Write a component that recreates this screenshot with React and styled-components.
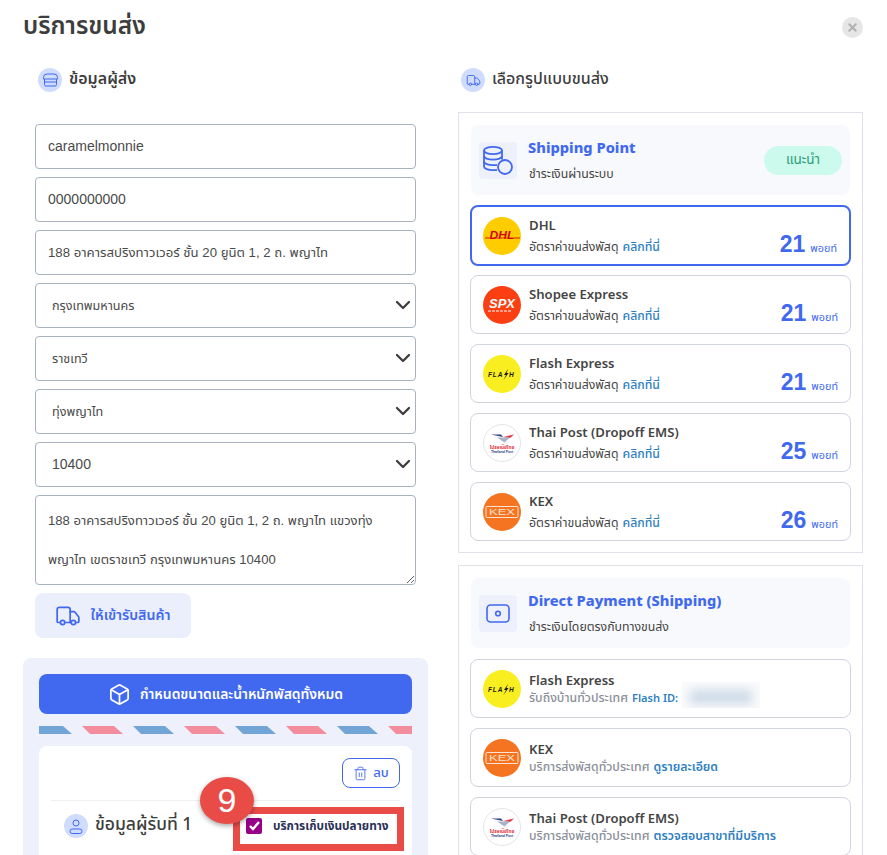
import styled, { createGlobalStyle } from 'styled-components'
import { ChevronDown, Box, Trash2, Truck, X } from 'lucide-react'

const GlobalStyle = createGlobalStyle`
  html, body {
    margin: 0;
    height: 855px;
    overflow: hidden;
    background: #fff;
    font-family: "Noto Sans Thai", "Noto Sans", "Liberation Sans", sans-serif;
    color: #444;
  }
  * { box-sizing: border-box; }
`

const Page = styled.div`
  width: 887px;
  height: 855px;
  overflow: hidden;
  padding: 11px 24px 0 23px;
`

const TitleBar = styled.div`
  display: flex;
  justify-content: space-between;
  align-items: center;
  height: 32px;
`

const Title = styled.h1`
  margin: 0;
  font-size: 24.4px;
  line-height: 32px;
  font-weight: 600;
  color: #3d3d3d;
`

const CloseButton = styled.button`
  width: 21px;
  height: 21px;
  padding: 0;
  border: 0;
  border-radius: 50%;
  background: #e6e6e6;
  color: #b0b0b0;
  display: flex;
  align-items: center;
  justify-content: center;
`

const Columns = styled.div`
  display: grid;
  grid-template-columns: 405px 405px;
  column-gap: 30px;
  margin-top: 25px;
`

const Heading = styled.div`
  display: flex;
  align-items: center;
  gap: 7px;
  height: 24px;
  padding-left: ${p => p.$indent}px;
  font-size: 16px;
  font-weight: ${p => p.$weight};
  color: #3d3d3d;
`

const LiftedText = styled.span`
  margin-bottom: ${p => p.$lift}px;
`

const HeadingIcon = styled.span`
  width: 24px;
  height: 24px;
  border-radius: 50%;
  background: #d0dcfd;
  color: #4169ef;
  display: flex;
  align-items: center;
  justify-content: center;
  flex: none;
`

const Form = styled.div`
  display: flex;
  flex-direction: column;
  gap: 8px;
  margin: 32px 12px 0;
`

const Input = styled.input`
  width: 381px;
  height: 45px;
  padding: 0 12px ${p => (p.$thai ? 0 : 2)}px;
  border: 1px solid #a9b2bf;
  border-radius: 4px;
  font: ${p => (p.$thai ? 13.2 : 14)}px "Liberation Sans", "Noto Sans Thai", sans-serif;
  color: #4a4a4a;
`

const SelectWrap = styled.div`
  position: relative;
  width: 381px;
  color: #3d3d3d;

  svg {
    position: absolute;
    right: 1px;
    top: 10px;
    pointer-events: none;
  }
`

const Select = styled.select`
  appearance: none;
  width: 100%;
  height: 45px;
  padding: 0 16px ${p => (p.$thai ? 0 : 2)}px;
  background: #fff;
  border: 1px solid #a9b2bf;
  border-radius: 4px;
  font: ${p => (p.$thai ? 12.6 : 14)}px "Liberation Sans", "Noto Sans Thai", sans-serif;
  color: #4a4a4a;
`

const TextArea = styled.textarea`
  width: 381px;
  height: 90px;
  padding: 5px 12px;
  border: 1px solid #a9b2bf;
  border-radius: 4px;
  font: 13.1px/39px "Liberation Sans", "Noto Sans Thai", sans-serif;
  color: #4a4a4a;
  overflow: hidden;
  display: block;
`

const PickupButton = styled.button`
  width: 156px;
  height: 45px;
  border: 0;
  border-radius: 8px;
  background: #ebeffc;
  color: #4169ef;
  display: flex;
  align-items: center;
  justify-content: center;
  gap: 9px;
  font: 600 14.2px "Noto Sans Thai", "Noto Sans", sans-serif;
`

const ParcelPanel = styled.div`
  margin-top: 20px;
  width: 405px;
  padding: 16px;
  background: #eef1fb;
  border-radius: 8px;
`

const SizeButton = styled.button`
  width: 373px;
  height: 40px;
  border: 0;
  border-radius: 8px;
  background: #4169ef;
  color: #fff;
  display: flex;
  align-items: center;
  justify-content: center;
  gap: 9px;
  font: 600 13.9px "Noto Sans Thai", "Noto Sans", sans-serif;
`

const Stripes = styled.svg`
  display: block;
  margin: 12px 0;
`

const RecipientCard = styled.div`
  background: #fff;
  border-radius: 8px;
  padding: 12px 12px 40px;
`

const DeleteRow = styled.div`
  display: flex;
  justify-content: flex-end;
  padding-bottom: 12px;
  border-bottom: 1px solid #eff0f3;
`

const DeleteButton = styled.button`
  width: 58px;
  height: 30px;
  background: #fff;
  border: 1px solid #4169ef;
  border-radius: 8px;
  color: #4169ef;
  display: flex;
  align-items: center;
  justify-content: center;
  gap: 5px;
  font: 500 13px "Noto Sans Thai", "Noto Sans", sans-serif;
`

const RecipientRow = styled.div`
  position: relative;
  display: flex;
  align-items: flex-start;
  justify-content: space-between;
  padding: 6px 0 0 13px;
`

const RecipientName = styled.div`
  display: flex;
  align-items: center;
  gap: 7px;
  height: 24px;
  margin-top: 7px;
  font-size: 17.5px;
  font-weight: 500;
  color: #3d3d3d;
`

const CodBox = styled.label`
  display: flex;
  align-items: center;
  gap: 11px;
  width: 171px;
  height: 44px;
  margin-right: -4px;
  padding: 0 0 6px 6px;
  border: 7px solid #e94b47;
  font-size: 11.8px;
  font-weight: 700;
  color: #2a3154;
`

const CheckMark = styled.span`
  width: 16px;
  height: 16px;
  border-radius: 2px;
  background: #960087;
  color: #fff;
  display: flex;
  align-items: center;
  justify-content: center;
  flex: none;
`

const StepBadge = styled.div`
  position: absolute;
  left: 149px;
  top: -24px;
  width: 54px;
  height: 47px;
  border-radius: 50%;
  background: #e94b47;
  box-shadow: 0 2px 5px rgba(0, 0, 0, 0.35);
  color: #fff;
  font: 34px/47px "Liberation Sans", sans-serif;
  text-align: center;
`

const MethodPanel = styled.div`
  width: 405px;
  padding: 12px 11px 11px;
  border: 1px solid #dfe2ea;
  display: flex;
  flex-direction: column;
  gap: 10px;
  & + & {
    margin-top: 12px;
  }
`

const PanelStack = styled.div`
  margin-top: 20px;
`

const MethodHead = styled.div`
  display: flex;
  align-items: center;
  height: 70px;
  margin: 0 1px ${p => p.$after}px;
  padding: 0 8px;
  border-radius: 8px;
  background: #f8f9fc;
`

const HeadTile = styled.div`
  width: 38px;
  height: 37px;
  border-radius: 4px;
  background: #eef1fb;
  color: #4169ef;
  display: flex;
  align-items: center;
  justify-content: center;
  flex: none;
`

const HeadText = styled.div`
  margin-left: 11px;
  flex: 1;
`

const HeadTitle = styled.div`
  font-size: 14.6px;
  line-height: 24px;
  font-weight: 800;
  color: #4169ef;
`

const HeadSub = styled.div`
  font-size: 12.3px;
  line-height: 18px;
  margin-top: 5px;
  padding-left: 1px;
  color: #444;
`

const Pill = styled.span`
  width: 78px;
  height: 29px;
  border-radius: 15px;
  background: #ccfbed;
  color: #2a9d78;
  font-size: 13.5px;
  display: flex;
  align-items: center;
  justify-content: center;
`

const Row = styled.div`
  display: flex;
  align-items: center;
  height: ${p => (p.$selected ? 61 : 59)}px;
  margin-bottom: ${p => (p.$selected ? -1 : 0)}px;
  padding: 0 12px 0 ${p => (p.$selected ? 11 : 12)}px;
  border: ${p => (p.$selected ? '2px solid #4169ef' : '1px solid #cfd4de')};
  border-radius: 8px;
`

const LogoWrap = styled.svg`
  flex: none;
  display: block;
`

const RowText = styled.div`
  margin: 2px 0 0 8px;
  flex: 1;
`

const RowName = styled.div`
  font-size: 13.1px;
  line-height: 18px;
  font-weight: 600;
  color: #444;
`

const RowSub = styled.div`
  display: flex;
  align-items: center;
  gap: 4px;
  font-size: 12.3px;
  line-height: 18px;
  font-weight: ${p => (p.$muted ? 500 : 400)};
  margin-top: ${p => (p.$muted ? 0 : 4)}px;
  color: ${p => (p.$muted ? '#8a8f99' : '#444')};
`

const Link = styled.span`
  color: #2f7fc1;
  font-weight: ${p => (p.$bold ? 600 : 500)};
  font-size: ${p => (p.$small ? '11px' : 'inherit')};
`

const Points = styled.div`
  align-self: flex-end;
  display: flex;
  align-items: baseline;
  gap: 5px;
  padding-bottom: 7px;
  color: #4169ef;
  font-size: 10.8px;
`

const PointValue = styled.span`
  font: 700 23px/26px "Liberation Sans", sans-serif;
`

const BlurredId = styled.span`
  width: 78px;
  height: 26px;
  background: #f9fafc;
  overflow: hidden;
  margin-top: -8px;
  display: block;

  &::after {
    content: '';
    display: block;
    width: 62px;
    height: 14px;
    margin: 8px 0 0 8px;
    background: #cfdbe8;
    filter: blur(5px);
  }
`

const StoreIcon = () => (
  <svg width="15" height="14" viewBox="0 0 15 14" fill="none" stroke="currentColor" strokeWidth="1">
    <path d="M4 1h7a3.5 3.5 0 0 1 3.5 3.5V6H.5V4.5A3.5 3.5 0 0 1 4 1z" />
    <path d="M1.5 6v5.5A1.5 1.5 0 0 0 3 13h9a1.5 1.5 0 0 0 1.5-1.5V6" />
    <path d="M1.5 9h12" />
  </svg>
)

const UserIcon = () => (
  <svg width="14" height="15" viewBox="0 0 14 15" fill="none" stroke="currentColor" strokeWidth="1">
    <circle cx="7" cy="4" r="3" />
    <rect x="1" y="10" width="12" height="4.5" rx="2.2" />
  </svg>
)

const CoinsIcon = () => (
  <svg width="30" height="29" viewBox="0 0 30 29" fill="none" stroke="currentColor" strokeWidth="1.8">
    <ellipse cx="10" cy="4.5" rx="9" ry="3.6" />
    <path d="M1 4.5v16c0 2 4 3.6 9 3.6h4" />
    <path d="M19 4.5v9" />
    <path d="M1 10c0 2 4 3.6 9 3.6s9-1.6 9-3.6" />
    <path d="M1 15.5c0 2 4 3.6 9 3.6h4" />
    <circle cx="22" cy="21" r="7" fill="#eef1fb" />
  </svg>
)

const CashIcon = () => (
  <svg width="24" height="19" viewBox="0 0 24 19" fill="none" stroke="currentColor" strokeWidth="1.6">
    <rect x="1" y="1" width="22" height="17" rx="3.5" />
    <circle cx="12" cy="9.5" r="2.3" />
    <path d="M4.5 4.5h.01M19.5 4.5h.01M4.5 14.5h.01M19.5 14.5h.01" strokeWidth="1.8" />
  </svg>
)

// logos redrawn by hand, only their shape and colours
const Logo = ({ kind }) => {
  if (kind === 'dhl') {
    return (
      <LogoWrap width="38" height="38" viewBox="0 0 38 38">
        <circle cx="19" cy="19" r="19" fill="#ffcc00" />
        <path d="M2 21h35" stroke="#d40511" strokeWidth="0.9" />
        <text x="19" y="22" textAnchor="middle" textLength="25" lengthAdjust="spacingAndGlyphs" fontSize="10" fontWeight="700" fontStyle="italic" fill="#d40511" stroke="#ffcc00" strokeWidth="0.5" paintOrder="stroke" fontFamily="Liberation Sans">DHL</text>
      </LogoWrap>
    )
  }
  if (kind === 'spx') {
    return (
      <LogoWrap width="38" height="38" viewBox="0 0 38 38">
        <circle cx="19" cy="19" r="19" fill="#fb3f12" />
        <text x="19" y="22" textAnchor="middle" fontSize="13" fontWeight="700" fontStyle="italic" fill="#fff" fontFamily="Liberation Sans">SPX</text>
        <path d="M5 25h24" stroke="#fff" strokeWidth="1" strokeDasharray="3 1" />
      </LogoWrap>
    )
  }
  if (kind === 'flash') {
    return (
      <LogoWrap width="38" height="38" viewBox="0 0 38 38">
        <circle cx="19" cy="19" r="19" fill="#f9ee1f" />
        <text x="5" y="21.5" fontSize="6.5" fontWeight="700" fontStyle="italic" letterSpacing="0.9" fill="#1c1c1c" fontFamily="Liberation Sans">FLA</text>
        <path d="M25 14l-4 6h2l-2.5 5 5-7h-2z" fill="#1c1c1c" />
        <text x="26" y="21.5" fontSize="6.5" fontWeight="700" fontStyle="italic" fill="#1c1c1c" fontFamily="Liberation Sans">H</text>
      </LogoWrap>
    )
  }
  if (kind === 'post') {
    return (
      <LogoWrap width="38" height="38" viewBox="0 0 38 38">
        <circle cx="19" cy="19" r="18.5" fill="#fff" stroke="#e4e5ea" />
        <path d="M8 10.5h10l2 2.5z" fill="#2a3f87" />
        <path d="M20 13l11-2.5-4 3.5z" fill="#e2343f" />
        <path d="M14 13.5h13l-5.5 5z" fill="#aab2c8" />
        <text x="19" y="24.5" textAnchor="middle" fontSize="4.6" fontWeight="700" fill="#e2343f" fontFamily="Noto Sans Thai, Noto Sans, sans-serif">ไปรษณีย์ไทย</text>
        <text x="19" y="28.5" textAnchor="middle" fontSize="3.4" fontWeight="700" fill="#2a3f87" fontFamily="Liberation Sans">Thailand Post</text>
      </LogoWrap>
    )
  }
  return (
    <LogoWrap width="38" height="38" viewBox="0 0 38 38">
      <circle cx="19" cy="19" r="19" fill="#f47421" />
      <rect x="3" y="13.5" width="32" height="11" rx="1" fill="none" stroke="#fde3cf" strokeWidth="1" />
      <text x="19" y="22.3" textAnchor="middle" textLength="26" lengthAdjust="spacingAndGlyphs" fontSize="8.5" fill="#fde3cf" fontFamily="Liberation Sans">KEX</text>
    </LogoWrap>
  )
}

const pointRows = [
  { logo: 'dhl', name: 'DHL', points: 21, selected: true },
  { logo: 'spx', name: 'Shopee Express', points: 21 },
  { logo: 'flash', name: 'Flash Express', points: 21 },
  { logo: 'post', name: 'Thai Post (Dropoff EMS)', points: 25 },
  { logo: 'kex', name: 'KEX', points: 26 }
]

const directRows = [
  { logo: 'flash', name: 'Flash Express', sub: 'รับถึงบ้านทั่วประเทศ', link: 'Flash ID:', blurred: true },
  { logo: 'kex', name: 'KEX', sub: 'บริการส่งพัสดุทั่วประเทศ', link: 'ดูรายละเอียด' },
  { logo: 'post', name: 'Thai Post (Dropoff EMS)', sub: 'บริการส่งพัสดุทั่วประเทศ', link: 'ตรวจสอบสาขาที่มีบริการ' }
]

const Dropdown = ({ value, thai }) => (
  <SelectWrap>
    <Select defaultValue={value} $thai={thai}>
      <option>{value}</option>
    </Select>
    <ChevronDown size={24} strokeWidth={2.3} />
  </SelectWrap>
)

export default function App() {
  return (
    <Page>
      <GlobalStyle />
      <TitleBar>
        <Title>บริการขนส่ง</Title>
        <CloseButton>
          <X size={13} strokeWidth={3.5} />
        </CloseButton>
      </TitleBar>

      <Columns>
        <div>
          <Heading $indent={15} $weight={600}>
            <HeadingIcon><StoreIcon /></HeadingIcon>
            <LiftedText $lift={2}>ข้อมูลผู้ส่ง</LiftedText>
          </Heading>
          <Form>
            <Input defaultValue="caramelmonnie" />
            <Input defaultValue="0000000000" />
            <Input $thai defaultValue="188 อาคารสปริงทาวเวอร์ ชั้น 20 ยูนิต 1, 2 ถ. พญาไท" />
            <Dropdown thai value="กรุงเทพมหานคร" />
            <Dropdown thai value="ราชเทวี" />
            <Dropdown thai value="ทุ่งพญาไท" />
            <Dropdown value="10400" />
            <TextArea defaultValue="188 อาคารสปริงทาวเวอร์ ชั้น 20 ยูนิต 1, 2 ถ. พญาไท แขวงทุ่งพญาไท เขตราชเทวี กรุงเทพมหานคร 10400" />
            <PickupButton>
              <Truck size={26} strokeWidth={1.6} />
              ให้เข้ารับสินค้า
            </PickupButton>
          </Form>

          <ParcelPanel>
            <SizeButton>
              <Box size={23} strokeWidth={1.8} />
              กำหนดขนาดและน้ำหนักพัสดุทั้งหมด
            </SizeButton>
            <Stripes width="373" height="8">
              <defs>
                <pattern id="airmail" x="-8" width="102" height="8" patternUnits="userSpaceOnUse">
                  <polygon points="0,0 32,0 41,8 8,8" fill="#70a5d6" />
                  <polygon points="51,0 83,0 92,8 59,8" fill="#f38d9d" />
                </pattern>
              </defs>
              <rect width="373" height="8" fill="url(#airmail)" />
            </Stripes>
            <RecipientCard>
              <DeleteRow>
                <DeleteButton>
                  <Trash2 size={15} strokeWidth={1.4} />
                  ลบ
                </DeleteButton>
              </DeleteRow>
              <RecipientRow>
                <RecipientName>
                  <HeadingIcon><UserIcon /></HeadingIcon>
                  <LiftedText $lift={4}>ข้อมูลผู้รับที่ 1</LiftedText>
                </RecipientName>
                <CodBox>
                  <CheckMark>
                    <svg width="11" height="10" viewBox="0 0 11 10" fill="none" stroke="currentColor" strokeWidth="2.4">
                      <path d="M1 5l3 3 6-7" />
                    </svg>
                  </CheckMark>
                  บริการเก็บเงินปลายทาง
                </CodBox>
                <StepBadge>9</StepBadge>
              </RecipientRow>
            </RecipientCard>
          </ParcelPanel>
        </div>

        <div>
          <Heading $indent={3} $weight={500}>
            <HeadingIcon><Truck size={15} strokeWidth={1.5} /></HeadingIcon>
            <LiftedText $lift={2}>เลือกรูปแบบขนส่ง</LiftedText>
          </Heading>
          <PanelStack>
            <MethodPanel>
              <MethodHead $after={0}>
                <HeadTile><CoinsIcon /></HeadTile>
                <HeadText>
                  <HeadTitle>Shipping Point</HeadTitle>
                  <HeadSub>ชำระเงินผ่านระบบ</HeadSub>
                </HeadText>
                <Pill>แนะนำ</Pill>
              </MethodHead>
              {pointRows.map(row => (
                <Row key={row.name} $selected={row.selected}>
                  <Logo kind={row.logo} />
                  <RowText>
                    <RowName>{row.name}</RowName>
                    <RowSub>อัตราค่าขนส่งพัสดุ <Link>คลิกที่นี่</Link></RowSub>
                  </RowText>
                  <Points>
                    <PointValue>{row.points}</PointValue>
                    พอยท์
                  </Points>
                </Row>
              ))}
            </MethodPanel>
            <MethodPanel>
              <MethodHead $after={1}>
                <HeadTile><CashIcon /></HeadTile>
                <HeadText>
                  <HeadTitle>Direct Payment (Shipping)</HeadTitle>
                  <HeadSub>ชำระเงินโดยตรงกับทางขนส่ง</HeadSub>
                </HeadText>
              </MethodHead>
              {directRows.map(row => (
                <Row key={row.name}>
                  <Logo kind={row.logo} />
                  <RowText>
                    <RowName>{row.name}</RowName>
                    <RowSub $muted>
                      {row.sub} <Link $bold $small={row.blurred}>{row.link}</Link>
                      {row.blurred && <BlurredId />}
                    </RowSub>
                  </RowText>
                </Row>
              ))}
            </MethodPanel>
          </PanelStack>
        </div>
      </Columns>
    </Page>
  )
}
